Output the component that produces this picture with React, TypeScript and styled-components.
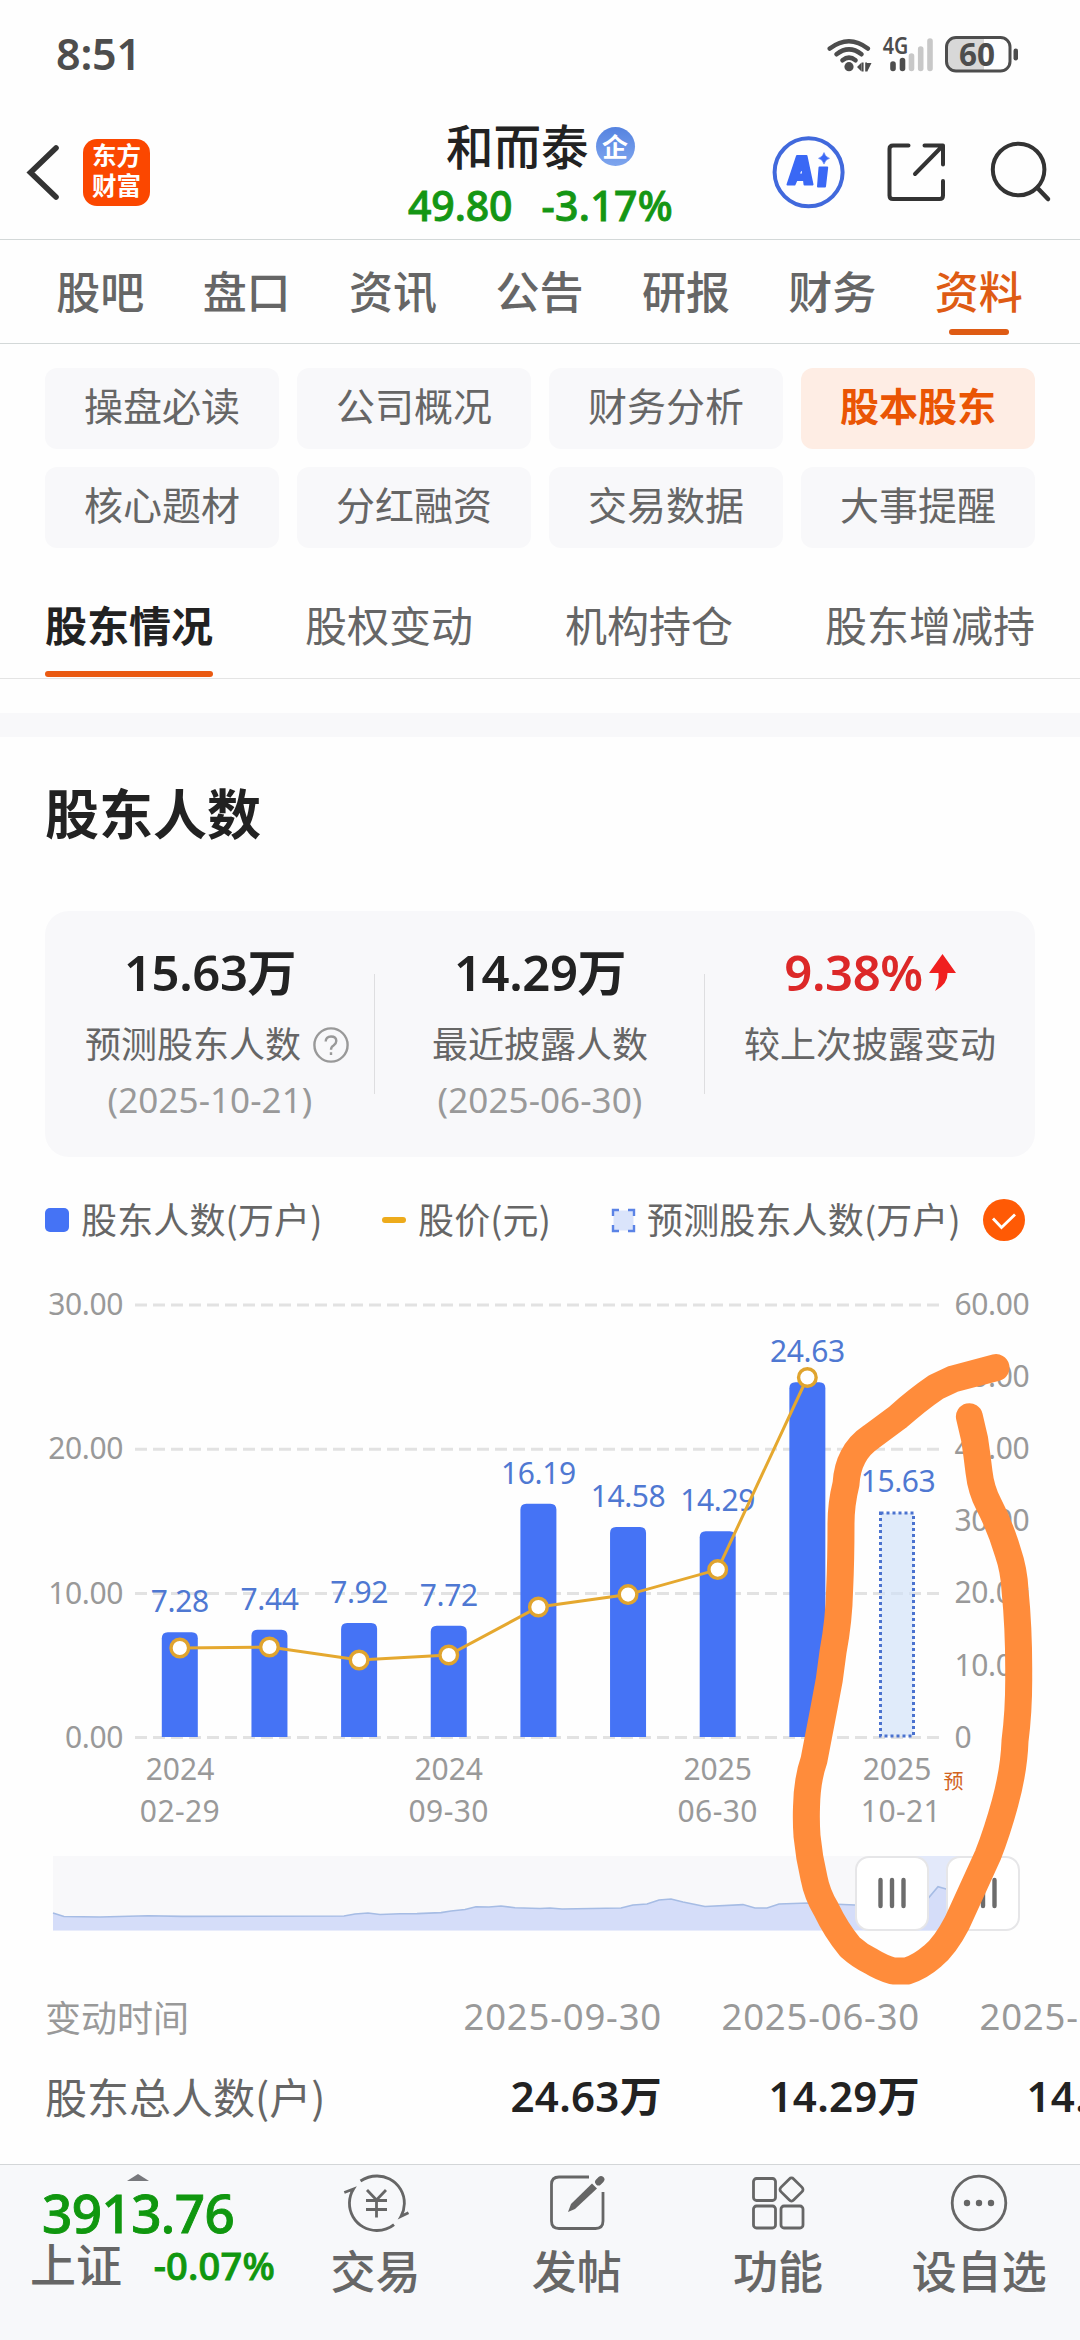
import React from 'react';
import styled, { createGlobalStyle, css } from 'styled-components';

const GlobalStyle = createGlobalStyle`
  * { box-sizing: border-box; }
  body { margin: 0; background: #fefefe; }
`;

const sans = css`font-family: 'Noto Sans', 'Noto Sans CJK SC', sans-serif;`;
const cjk = css`font-family: 'Noto Sans CJK SC', sans-serif;`;

const Screen = styled.main`
  ${sans}
  width: 1080px;
  height: 2340px;
  overflow: hidden;
  display: flex;
  flex-direction: column;
  background: #fefefe;
  color: #666;
`;

/* ---------- status bar ---------- */
const StatusBar = styled.header`
  height: 108px;
  flex: none;
  display: flex;
  justify-content: space-between;
  align-items: center;
  padding: 0 60px 0 56px;
  color: #4d4d4d;
`;
const Clock = styled.time`
  font-size: 43px;
  font-weight: 600;
  line-height: 60px;
  letter-spacing: -0.2px;
`;
const StatusIcons = styled.svg`
  display: block;
  width: 194px;
  height: 44px;
  font-family: 'Noto Sans', sans-serif;
`;

/* ---------- title bar ---------- */
const TitleBar = styled.header`
  height: 132px;
  flex: none;
  display: grid;
  grid-template-columns: 408px 1fr 407px;
  border-bottom: 1px solid #d3d8d8;
`;
const TitleLeft = styled.div`
  display: flex;
  align-items: center;
  padding: 0 0 3px 26px;
  gap: 23px;
`;
const Logo = styled.div`
  ${cjk}
  width: 67px;
  height: 67px;
  border-radius: 14px;
  background: #fb4700;
  color: #fff;
  display: flex;
  flex-direction: column;
  justify-content: center;
  align-items: center;
  font-weight: 700;
  font-size: 24.5px;
  line-height: 30px;
  padding-bottom: 4px;
`;
const StockHead = styled.div`
  display: flex;
  flex-direction: column;
`;
const StockName = styled.h1`
  ${cjk}
  display: flex;
  align-items: center;
  gap: 7px;
  margin: 7px 0 0 38px;
  font-size: 47.5px;
  line-height: 60px;
  font-weight: 500;
  color: #222;
`;
const CompanyBadge = styled.span`
  width: 39px;
  height: 39px;
  margin-top: 2px;
  border-radius: 50%;
  background: linear-gradient(#5583e0, #7ea5ee);
  color: #fff;
  font-size: 26px;
  line-height: 37px;
  text-align: center;
  font-weight: 700;
`;
const medium = css`
  font-weight: 500;
  -webkit-text-stroke: 0.9px currentColor;
`;
const Quote = styled.div`
  ${medium}
  display: flex;
  justify-content: space-between;
  line-height: 50px;
  margin-top: 5px;
  font-size: 41px;
  color: #149614;
  letter-spacing: -0.1px;
`;
const Change = styled.span`
  letter-spacing: 0.3px;
`;
const TitleRight = styled.div`
  display: flex;
  align-items: center;
  justify-content: flex-end;
  padding: 0 28px 3px 0;
`;
const Icon = styled.svg`
  display: block;
  flex: none;
  overflow: visible;
`;

/* ---------- tabs ---------- */
const Tabs = styled.nav`
  ${cjk}
  height: 104px;
  flex: none;
  display: grid;
  grid-template-columns: repeat(7, 1fr);
  padding: 0 28px 0 27px;
  border-bottom: 1px solid #d3d8d8;
`;
const Tab = styled.a<{ $active?: boolean }>`
  display: flex;
  flex-direction: column;
  align-items: center;
  padding-top: 18px;
  font-size: 44px;
  line-height: 64px;
  font-weight: 500;
  color: ${p => (p.$active ? '#de5b14' : '#666')};
  &::after {
    content: '';
    width: 60px;
    height: 6px;
    margin-top: 7px;
    border-radius: 3px;
    background: ${p => (p.$active ? '#de5b14' : 'transparent')};
  }
`;
const Chips = styled.div`
  ${cjk}
  flex: none;
  display: grid;
  grid-template-columns: repeat(4, 234px);
  grid-auto-rows: 81px;
  gap: 18px;
  padding: 24px 45px 0;
`;
const Chip = styled.button<{ $active?: boolean }>`
  border: 0;
  padding: 0 0 10px;
  border-radius: 12px;
  font: inherit;
  font-size: 39px;
  line-height: 60px;
  font-weight: ${p => (p.$active ? 700 : 400)};
  color: ${p => (p.$active ? '#ea5504' : '#666')};
  background: ${p => (p.$active ? '#feede4' : '#f8f8fa')};
`;
const SubTabs = styled.nav`
  ${cjk}
  flex: none;
  height: 131px;
  display: flex;
  justify-content: space-between;
  padding: 46px 45px 0;
  border-bottom: 1px solid #e4e4e4;
`;
const SubTab = styled.a<{ $active?: boolean }>`
  display: flex;
  flex-direction: column;
  justify-content: space-between;
  font-size: 42px;
  line-height: 60px;
  height: 83px;
  font-weight: ${p => (p.$active ? 700 : 400)};
  color: ${p => (p.$active ? '#222' : '#666')};
  &::after {
    content: '';
    height: 6px;
    border-radius: 3px;
    background: ${p => (p.$active ? '#ea5a12' : 'transparent')};
  }
`;
const Band = styled.div`
  flex: none;
  height: 24px;
  margin-top: 34px;
  background: #f8f8fa;
`;

/* ---------- summary ---------- */
const SectionTitle = styled.h2`
  ${cjk}
  flex: none;
  margin: 37px 0 0 45px;
  font-size: 54px;
  line-height: 76px;
  font-weight: 700;
  color: #222;
`;
const Summary = styled.section`
  flex: none;
  margin: 61px 45px 0;
  height: 246px;
  border-radius: 24px;
  background: #f8f8fa;
  display: grid;
  grid-template-columns: repeat(3, 1fr);
  align-items: start;
`;
const Stat = styled.div`
  display: flex;
  flex-direction: column;
  align-items: center;
`;
const Rule = styled.i`
  position: absolute;
  right: 0;
  top: 63px;
  width: 1px;
  height: 120px;
  background: #dedee0;
`;
const StatCell = styled.div`
  position: relative;
  height: 100%;
  padding-top: 25px;
`;
const StatValue = styled.div<{ $up?: boolean }>`
  display: flex;
  align-items: center;
  gap: 6px;
  height: 72px;
  line-height: 72px;
  font-size: 49px;
  font-weight: 600;
  letter-spacing: -0.4px;
  color: ${p => (p.$up ? '#dc2828' : '#222')};
`;
const StatLabel = styled.div<{ $shift?: boolean }>`
  ${cjk}
  display: flex;
  align-items: center;
  gap: 12px;
  height: 54px;
  margin-top: 7px;
  padding-left: ${p => (p.$shift ? 14 : 0)}px;
  font-size: 36px;
  line-height: 54px;
`;
const HelpIcon = styled(Icon)`
  margin-top: 5px;
`;
const StatDate = styled.div`
  height: 54px;
  line-height: 54px;
  margin-top: 4px;
  font-size: 35px;
  letter-spacing: 0.1px;
  color: #999;
`;

/* ---------- legend ---------- */
const Legend = styled.div`
  ${cjk}
  flex: none;
  display: flex;
  align-items: center;
  height: 60px;
  margin: 33px 0 10px;
  padding-left: 45px;
  font-size: 36px;
`;
const LegendItem = styled.span<{ $w: number }>`
  display: flex;
  align-items: center;
  gap: 12px;
  width: ${p => p.$w}px;
  white-space: nowrap;
`;
const LegendText = styled.span`
  line-height: 54px;
  padding-bottom: 5px;
  letter-spacing: 0.15px;
`;
const Swatch = styled.i`
  width: 24px;
  height: 24px;
  border-radius: 5px;
  background: #4573f5;
`;
const Dash = styled.i`
  width: 24px;
  height: 6px;
  border-radius: 3px;
  background: #edab1c;
`;

/* ---------- chart ---------- */
const Chart = styled.svg`
  flex: none;
  display: block;
  width: 1080px;
  height: 699px;
  overflow: visible;
  font-family: 'Noto Sans', 'Noto Sans CJK SC', sans-serif;
  font-size: 30px;
`;

/* ---------- table ---------- */
const Table = styled.div`
  flex: none;
  width: 1178px;
  height: 205px;
  padding-top: 19px;
`;
const Row = styled.div<{ $h: number }>`
  display: grid;
  grid-template-columns: 404px repeat(3, 258px);
  height: ${p => p.$h}px;
  line-height: ${p => p.$h}px;
`;
const RowLabel = styled.span<{ $head?: boolean }>`
  ${cjk}
  padding-left: 45px;
  font-size: ${p => (p.$head ? 36 : 42)}px;
  color: ${p => (p.$head ? '#999' : '#666')};
`;
const Cell = styled.span<{ $head?: boolean }>`
  text-align: right;
  font-size: ${p => (p.$head ? 36.5 : 42)}px;
  font-weight: ${p => (p.$head ? 400 : 600)};
  color: ${p => (p.$head ? '#999' : '#222')};
  letter-spacing: ${p => (p.$head ? 0.8 : 0.3)}px;
`;

/* ---------- bottom bar ---------- */
const BottomBar = styled.footer`
  flex: 1;
  display: grid;
  grid-template-columns: 275px repeat(4, 201.25px);
  background: #f7f8fa;
  border-top: 1px solid #d3d6d8;
`;
const IndexBox = styled.div`
  padding: 9px 0 0 30px;
`;
const Caret = styled.i`
  display: block;
  width: 0;
  height: 0;
  margin-left: 97px;
  border: 11px solid transparent;
  border-top: 0;
  border-bottom: 7px solid #77787c;
`;
const IndexValue = styled.div`
  ${medium}
  margin-left: 12px;
  font-size: 53px;
  line-height: 64px;
  letter-spacing: -0.6px;
  color: #10970f;
`;
const IndexLine = styled.div`
  display: flex;
  justify-content: space-between;
  align-items: center;
  line-height: 46px;
  margin-top: -3px;
`;
const IndexName = styled.span`
  ${cjk}
  font-size: 46px;
  font-weight: 500;
  margin-top: -6px;
`;
const IndexChange = styled.span`
  ${medium}
  font-size: 38px;
  letter-spacing: 0.2px;
  color: #10970f;
`;
const Action = styled.button`
  ${cjk}
  display: flex;
  flex-direction: column;
  align-items: center;
  gap: 4px;
  border: 0;
  padding: 8px 0 0;
  background: none;
  font-size: 45px;
  line-height: 66px;
  font-weight: 500;
  color: #666;
`;

const bars = [7.28, 7.44, 7.92, 7.72, 16.19, 14.58, 14.29, 24.63];
const priceY = [388, 387, 400, 395, 347, 334.6, 309.6, 117.5];
const cx = (i: number) => 179.8 + i * 89.65;
const BASE = 477;
const barTop = (v: number) => BASE - v * 14.4;

const xLabels: [number, string, string, number][] = [
  [180, '2024', '02-29', 0],
  [448.7, '2024', '09-30', 0],
  [717.7, '2025', '06-30', 0],
  [897, '2025', '10-21', 4],
];

const trend =
  '53,653 64,656.5 100,657 148,655.7 182,656.4 344,656 355,654 368,653 380,654.5 400,653.8 417,653.6 441,652.6 451,651 465,649.5 476,646.8 489,647 501,646 515,647.8 540,648.5 550,648 562,649 621,648 633,645 647,644 659,640 671,639 683,642 705,646.5 743,644.6 755,648 767,648 779,644 808,643 855,645 915,645 928,638.5 938,626.7 946,629 1000,632';

const Handle = ({ x }: { x: number }) => (
  <g>
    <rect x={x + 1} y={597} width={72} height={73} rx={13} fill="#fff" stroke="#e6e6e8" strokeWidth={2} />
    {[25.5, 37, 48.5].map(d => (
      <line key={d} x1={x + d} x2={x + d} y1={620} y2={646} stroke="#6c6c6c" strokeWidth={4.4} strokeLinecap="round" />
    ))}
  </g>
);

const HolderChart = () => (
  <Chart viewBox="0 0 1080 699">
    {[45, 189.3, 333.5, 477.5].map((y, i) => (
      <g key={y}>
        <line x1={135} x2={940} y1={y} y2={y} stroke="#e2e2e2" strokeWidth={3} strokeDasharray="12 6" />
        <text x={123} y={y + 10} textAnchor="end" fill="#999" letterSpacing={-0.4}>{['30.00', '20.00', '10.00', '0.00'][i]}</text>
      </g>
    ))}
    {['60.00', '50.00', '40.00', '30.00', '20.00', '10.00', '0'].map((t, i) => (
      <text key={t} x={954.5} y={55 + i * 72.1} fill="#999" letterSpacing={-0.4}>{t}</text>
    ))}
    {bars.map((v, i) => {
      const x = cx(i) - 18;
      const t = barTop(v);
      return (
        <g key={v}>
          <path d={`M${x} 477V${t + 6}q0-6 6-6h24q6 0 6 6V477z`} fill="#4573f5" />
          <text x={cx(i)} y={t - 20} textAnchor="middle" fill="#4f78d2" letterSpacing={-0.4}>{v.toFixed(2)}</text>
        </g>
      );
    })}
    <rect x={880.5} y={253} width={33} height={223} fill="#cfe0f8" fillOpacity={0.65} stroke="#4a72cf" strokeWidth={3} strokeDasharray="3 3" />
    <text x={898} y={232} textAnchor="middle" fill="#4f78d2" letterSpacing={-0.4}>15.63</text>
    <polyline points={priceY.map((y, i) => `${cx(i)},${y}`).join(' ')} fill="none" stroke="#e5a82f" strokeWidth={3} />
    {priceY.map((y, i) => (
      <circle key={i} cx={cx(i)} cy={y} r={8.8} fill="#fff" stroke="#e0a42e" strokeWidth={3.4} />
    ))}
    {xLabels.map(([x, a, b, dx]) => (
      <g key={x} fill="#999" textAnchor="middle">
        <text x={x} y={520}>{a}</text>
        <text x={x + dx} y={562} letterSpacing={0.4}>{b}</text>
      </g>
    ))}
    <text x={943.5} y={529} fontSize={20} fill="#d2641e">预</text>

    <rect x={53} y={596} width={930} height={74.5} fill="#f8f8fa" />
    <rect x={900} y={596} width={70} height={74.5} fill="#e3e9fa" />
    <polygon points={`53,670.5 ${trend} 1000,670.5`} fill="#d5ddf9" />
    <polyline points={trend} fill="none" stroke="#a6bce4" strokeWidth={1.6} />
    <Handle x={855} />
    <Handle x={946} />

    <path
      d="M996 107.6L953 119L936 127Q917 140 898 157L871 177Q859 185 853 197Q847 208 846 224Q841 244 841 264Q841 300 839.6 330Q839 360 833 392Q830 420 824 448L814 500Q807 520 806.5 547Q806 562 807 576Q809 597 814 618Q817 634 826 649Q836 670 850 687Q860 696 870.6 701Q882 708 893 711H907Q920 707 932.6 696Q945 686 957 663L988 595Q997 572 1005 543Q1014 510 1015 481Q1019 450 1018.7 415Q1019 370 1015 330Q1014 310 1008 292.6Q1000 266 989 245Q981 230 979 212Q977 195 974.6 179L969.4 156.7"
      fill="none"
      stroke="#ff8c3b"
      strokeWidth={27}
      strokeLinecap="round"
      strokeLinejoin="round"
    />
  </Chart>
);

const tabs = ['股吧', '盘口', '资讯', '公告', '研报', '财务', '资料'];
const chips = ['操盘必读', '公司概况', '财务分析', '股本股东', '核心题材', '分红融资', '交易数据', '大事提醒'];
const subTabs = ['股东情况', '股权变动', '机构持仓', '股东增减持'];

export default function App() {
  return (
    <Screen>
      <GlobalStyle />
      <StatusBar>
        <Clock>8:51</Clock>
        <StatusIcons viewBox="826 31 194 44">
          <g fill="none" stroke="#4d4d4d" strokeWidth={4.6} strokeLinecap="round">
            <path d="M829.8 47.5Q849 33 867.8 47.500" />
            <path d="M836.5 53.2Q849 43.500 861.5 53.2" />
            <path d="M842.5 59.2Q849 54 855.5 59.2" />
          </g>
          <circle cx={849} cy={65.7} r={4.6} fill="#4d4d4d" />
          <path d="M857 66l4.500-4.500v9zM871.500 62l-4.500 9v-9zM861.800 61.500h1.800v9h-1.800zM865.200 61.500h1.800v9h-1.800z" fill="#4d4d4d" />
          <text x={882.8} y={53.3} fontSize={22.5} fontWeight={600} fill="#4d4d4d" textLength={25.500} lengthAdjust="spacingAndGlyphs">4G</text>
          <g strokeWidth={5.6} strokeLinecap="round">
            <path d="M893 63v4.500M902.500 59.500v8" stroke="#4d4d4d" />
            <path d="M911.500 55v12.500M920.700 48v19.500M930 40v27.500" stroke="#c8c8c8" />
          </g>
          <path d="M984 37v33h-28q-9 0-9-9V46q0-9 9-9z" fill="#d8d8d8" />
          <rect x={946.5} y={36.5} width={63.5} height={33.5} rx={9.5} fill="none" stroke="#4d4d4d" strokeWidth={3} />
          <rect x={1013.5} y={47.5} width={4.5} height={12} rx={2.2} fill="#4d4d4d" />
          <text x={959} y={64.7} fontSize={32} fontWeight={700} fill="#4d4d4d" textLength={36} lengthAdjust="spacingAndGlyphs">60</text>
        </StatusIcons>
      </StatusBar>

      <TitleBar>
        <TitleLeft>
          <Icon width={34} height={60} viewBox="26 142 34 60">
            <path d="M56 148L30.500 172.500L56 197" fill="none" stroke="#333" strokeWidth={5.6} strokeLinecap="round" />
          </Icon>
          <Logo><span>东方</span><span>财富</span></Logo>
        </TitleLeft>
        <StockHead>
          <StockName>和而泰<CompanyBadge>企</CompanyBadge></StockName>
          <Quote><span>49.80</span><Change>-3.17%</Change></Quote>
        </StockHead>
        <TitleRight>
          <Icon width={280} height={76} viewBox="772 134 280 76" fill="none" stroke="#333" strokeWidth={4}>
            <circle cx={808.6} cy={172.3} r={34} stroke="#4169dc" />
            <g fill="#3a68f5" stroke="#3a68f5" strokeWidth={2} strokeLinejoin="round">
              <path fillRule="evenodd" d="M787.500 184.500L797 156H806.500L812.500 184.500H804.500L804 180H796.500L794.500 184.500zM798.500 174.500H803L802.300 166z" />
              <path d="M819.500 167.500H827.200L825 186.500H818z" />
              <path strokeWidth={0.5} d="M824 152.500q1.400 4.600 5.500 5.800q-4.100 1.300-5.500 5.800q-1.400-4.500-5.500-5.800q4.100-1.200 5.500-5.800z" />
            </g>
            <g strokeLinecap="round" strokeLinejoin="round">
              <path d="M908.500 145.500H893Q889.500 145.500 889.500 149V195.500Q889.500 199 893 199H939.500Q943 199 943 195.500V181" />
              <path d="M924.500 145.500H943V164.500M942 146.500L915 174" />
              <circle cx={1018.6} cy={169.5} r={25.8} />
              <path d="M1037.500 188L1048 199" strokeWidth={4.5} />
            </g>
          </Icon>
        </TitleRight>
      </TitleBar>

      <Tabs>{tabs.map(t => <Tab key={t} $active={t === '资料'}>{t}</Tab>)}</Tabs>
      <Chips>{chips.map(t => <Chip key={t} $active={t === '股本股东'}>{t}</Chip>)}</Chips>
      <SubTabs>{subTabs.map(t => <SubTab key={t} $active={t === '股东情况'}>{t}</SubTab>)}</SubTabs>
      <Band />

      <SectionTitle>股东人数</SectionTitle>
      <Summary>
        <StatCell>
          <Stat>
            <StatValue>15.63万</StatValue>
            <StatLabel $shift>
              预测股东人数
              <HelpIcon width={36} height={36} viewBox="0 0 36 36" fill="none" stroke="#999" strokeWidth={2.4}>
                <circle cx={18} cy={18} r={16.6} />
                <path d="M12.700 14.500Q12.700 9.500 18 9.500Q23.300 9.500 23.300 14Q23.300 16.500 20.500 18.500Q18 20 18 22.700M18 25.300V28" />
              </HelpIcon>
            </StatLabel>
            <StatDate>(2025-10-21)</StatDate>
          </Stat>
          <Rule />
        </StatCell>
        <StatCell>
          <Stat>
            <StatValue>14.29万</StatValue>
            <StatLabel>最近披露人数</StatLabel>
            <StatDate>(2025-06-30)</StatDate>
          </Stat>
          <Rule />
        </StatCell>
        <StatCell>
          <Stat>
            <StatValue $up>
              9.38%
              <Icon width={27} height={37} viewBox="0 0 27 37">
                <path d="M13.500 0L27 19H18.500Q19 30 6 37Q10.500 30 9.500 19H0z" fill="#f01f1f" />
              </Icon>
            </StatValue>
            <StatLabel>较上次披露变动</StatLabel>
          </Stat>
        </StatCell>
      </Summary>

      <Legend>
        <LegendItem $w={337}><Swatch /><LegendText>股东人数(万户)</LegendText></LegendItem>
        <LegendItem $w={230}><Dash /><LegendText>股价(元)</LegendText></LegendItem>
        <LegendItem $w={371}>
          <Icon width={23} height={23} viewBox="0 0 23 23">
            <rect x={1.5} y={1.5} width={20} height={20} fill="#dae4fb" />
            <path d="M1 7V1H7M16 1H22V7M22 16V22H16M7 22H1V16" fill="none" stroke="#5b83e6" strokeWidth={2.4} />
          </Icon>
          <LegendText>预测股东人数(万户)</LegendText>
        </LegendItem>
        <Icon width={42} height={42} viewBox="0 0 42 42">
          <circle cx={21} cy={21} r={21} fill="#ff5a05" />
          <path d="M10 19.500L18.500 28.500L32 15.500" fill="none" stroke="#fff" strokeWidth={2.8} />
        </Icon>
      </Legend>

      <HolderChart />

      <Table>
        <Row $h={76}>
          <RowLabel $head>变动时间</RowLabel>
          <Cell $head>2025-09-30</Cell>
          <Cell $head>2025-06-30</Cell>
          <Cell $head>2025-03-31</Cell>
        </Row>
        <Row $h={84}>
          <RowLabel>股东总人数(户)</RowLabel>
          <Cell>24.63万</Cell>
          <Cell>14.29万</Cell>
          <Cell>14.58万</Cell>
        </Row>
      </Table>

      <BottomBar>
        <IndexBox>
          <Caret />
          <IndexValue>3913.76</IndexValue>
          <IndexLine><IndexName>上证</IndexName><IndexChange>-0.07%</IndexChange></IndexLine>
        </IndexBox>
        <Action>
          <Icon width={66} height={60} viewBox="342 2174 66 60" fill="none" stroke="#666" strokeWidth={2.8}>
            <path d="M359.500 2182Q367 2177 376 2177A27.200 27.200 0 0 1 400 2217.300L407.500 2213.700M393 2225.700Q386 2231.500 376 2231.500A27.200 27.200 0 0 1 352.500 2190L343.300 2193.500" />
            <path d="M366 2191L375.500 2201L385 2191M365 2201.500H386M365 2210.500H386M375.500 2201V2218.500" />
          </Icon>
          交易
        </Action>
        <Action>
          <Icon width={56} height={60} viewBox="549 2174 56 60" fill="none" stroke="#666" strokeWidth={2.8}>
            <path d="M589 2178H559Q551.500 2178 551.500 2185.500V2222Q551.500 2229.500 559 2229.500H595.500Q603 2229.500 603 2222V2193" />
            <path d="M568 2213L571 2205L592 2184.500L597 2189.500L575 2210z" fill="#666" stroke="none" />
            <path d="M598.500 2183L601 2180.500" strokeWidth={6.8} strokeLinecap="round" />
          </Icon>
          发帖
        </Action>
        <Action>
          <Icon width={56} height={60} viewBox="750 2174 56 60" fill="none" stroke="#666" strokeWidth={2.8}>
            <rect x={753.5} y={2179.5} width={22} height={22} rx={3} />
            <rect x={753.5} y={2207} width={22} height={22} rx={3} />
            <rect x={781} y={2207} width={22} height={22} rx={3} />
            <rect x={782.5} y={2181.5} width={18} height={18} rx={3} transform="rotate(45 791.5 2190.5)" />
          </Icon>
          功能
        </Action>
        <Action>
          <Icon width={60} height={60} viewBox="949 2174 60 60">
            <circle cx={979} cy={2204} r={26.8} fill="none" stroke="#666" strokeWidth={2.8} />
            <g fill="#666"><circle cx={967} cy={2204} r={3.2} /><circle cx={979} cy={2204} r={3.2} /><circle cx={991} cy={2204} r={3.2} /></g>
          </Icon>
          设自选
        </Action>
      </BottomBar>
    </Screen>
  );
}
